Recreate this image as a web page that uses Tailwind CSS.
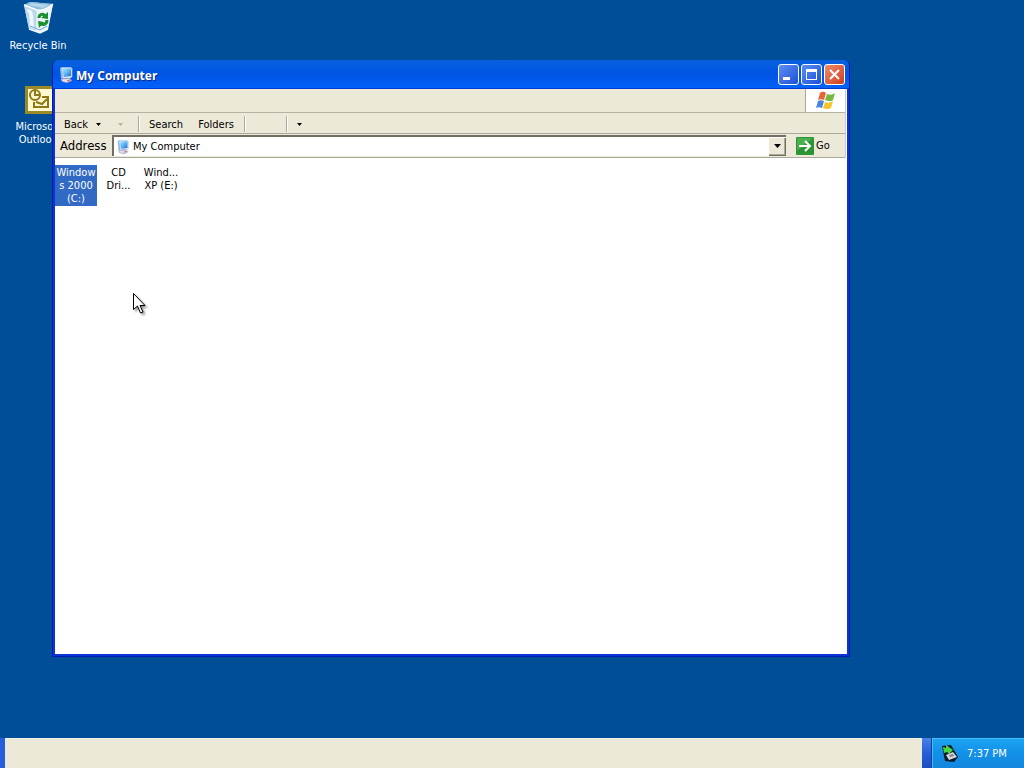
<!DOCTYPE html>
<html lang="en">
<head>
    <meta charset="UTF-8">
    <meta name="viewport" content="width=device-width, initial-scale=1.0">
    <title>My Computer</title>
    <!-- Tailwind CSS -->
    <script src="https://cdn.jsdelivr.net/npm/@tailwindcss/browser@4"></script>
</head>
<body class="h-screen overflow-hidden flex flex-col bg-[#004e98] font-['DejaVu_Sans_Condensed','Noto_Sans',sans-serif] text-[11px] leading-[13px] text-black cursor-default">
    <!-- Shared icons -->
    <svg class="absolute size-0" aria-hidden="true">
        <defs>
            <linearGradient id="screen" x1="0" y1="0" x2="1" y2="1">
                <stop offset="0" stop-color="#b9ecff"/>
                <stop offset=".5" stop-color="#5db5f3"/>
                <stop offset="1" stop-color="#2668cf"/>
            </linearGradient>
        </defs>
        <symbol id="computer" viewBox="0 0 16 16">
            <path d="M2 1l2-1 1 11-2 1z" fill="#8fb4dc"/>
            <path d="M3.500.5h9.500l1 1v8l-2 2H5z" fill="#d8e6f5" stroke="#a9c4e6" stroke-width=".7"/>
            <path d="M4 1.500h9v7.500L6 10z" fill="url(#screen)"/>
            <path d="M7 11h4l1 2H6z" fill="#8290b4"/>
            <path d="M3 12l8-.5 3 2-5 2.300-5-1.300z" fill="#e3e3ee" stroke="#8d86a8" stroke-width=".6"/>
            <path d="M9 14l3-1" stroke="#b05270"/>
        </symbol>
    </svg>

    <!-- Desktop -->
    <main class="relative flex-1 min-h-0">
        <a href="#" class="absolute left-0 top-0 w-19 flex flex-col items-center gap-1 text-white text-center">
            <svg class="w-8 h-[35px]" viewBox="0 0 32 35">
                <path d="M2 5l6-3 23 2-5 25-8 4-11-4z" fill="#d3e6f2"/>
                <path d="M2 5l6-3 23 2-8 5-8 1z" fill="#8dbbdc"/>
                <path d="M6 5l4-2 17 2-6 3z" fill="#b4d5ea"/>
                <path d="M2 5l13 5-1 21-7-2z" fill="#bcd8ea"/>
                <path d="M15 10c6 1 11-2 16-6l-5 25-8 4-4-2z" fill="#edf5fa"/>
                <path d="M4 9c5 5 3 11 4 18l5 2c-3-7 0-13-4-19z" fill="#eef8fd"/>
                <path d="M2 5l13 5c6 1 11-2 16-6" fill="none" stroke="#f8fdff" stroke-width="1.500"/>
                <path d="M7 29l11 4 8-4" fill="none" stroke="#f0f8fd" stroke-width="1.500"/>
                <path d="M8 26l10 4 7-4" fill="none" stroke="#6ca6e0"/>
                <g fill="none" stroke="#16912c" stroke-width="3">
                    <path d="M17 18c0-4 4-5 6-2"/>
                    <path d="M25 20c0 4-3 5-6 4"/>
                </g>
                <path d="M26 12v7l-7-1zM16 21l6 1-5 6z" fill="#16912c"/>
            </svg>
            <span>Recycle Bin</span>
        </a>
        <a href="#" class="absolute left-0 top-[85px] w-19 flex flex-col items-center gap-1 text-white text-center">
            <svg class="w-8 h-[31px]" viewBox="0 0 32 31">
                <path d="M3 1h29v28H3z" fill="#9c8a24"/>
                <path d="M6 4h26v22H6z" fill="#fff9cf"/>
                <g fill="none" stroke="#8d7a17" stroke-width="2">
                    <circle cx="13" cy="10" r="5"/>
                    <path d="M13 6v4h4M20 12h6v10H12v-5M14 17l6 2 5-5"/>
                </g>
            </svg>
            <span>Microsoft<br>Outlook</span>
        </a>

        <!-- Window -->
        <section class="absolute left-[52px] top-[60px] w-[798px] h-[597px] flex flex-col rounded-t-md overflow-hidden bg-[#0a34d4] border-x border-b border-[#0019b8] px-0.5 pb-0.5">
            <header class="-mx-[3px] h-[29px] shrink-0 flex items-center gap-0.5 pt-px pl-1.5 pr-[5px] bg-linear-to-b from-[#0a62df] via-[#0054e3] to-[#0362fb] border-b border-[#003bd0]">
                <svg class="size-4"><use href="#computer"/></svg>
                <h1 class="flex-1 pt-0.5 font-['Open_Sans',sans-serif] font-bold text-[12px] leading-4 text-white text-shadow-[1px_1px_0_#0a2a8c]">My Computer</h1>
                <button aria-label="Minimize" class="size-[21px] rounded-[3px] border border-white bg-linear-to-br from-[#5d8df2] to-[#1b4fd8]">
                    <svg viewBox="0 0 19 19"><path d="M4 12h7v3H4z" fill="#fff"/></svg>
                </button>
                <button aria-label="Maximize" class="size-[21px] rounded-[3px] border border-white bg-linear-to-br from-[#5d8df2] to-[#1b4fd8]">
                    <svg viewBox="0 0 19 19"><path d="M4 4h11v11H4zM5 7v7h9V7z" fill="#fff" fill-rule="evenodd"/></svg>
                </button>
                <button aria-label="Close" class="size-[21px] rounded-[3px] border border-white bg-linear-to-br from-[#ee8a6b] to-[#cf3a16]">
                    <svg viewBox="0 0 19 19"><path d="M5 5l9 9M14 5l-9 9" stroke="#fff" stroke-width="2"/></svg>
                </button>
            </header>

            <div class="flex-1 min-h-0 flex flex-col bg-white">
                <!-- Bars -->
                <div class="mr-px shrink-0 bg-[#ece9d8] border-r border-[#d0cdbf]">
                    <div class="h-6 flex justify-end border-b border-[#b5b2a2]">
                        <div class="w-10 flex items-center justify-center bg-white border-l border-[#aca899]">
                            <svg class="w-5 h-5" viewBox="0 0 20 20">
                                <path d="M4 2c3-2 4-1 6 0L8 9C6 8 4 8 2 9z" fill="#e8633a"/>
                                <path d="M11 3c3 1 5 1 8-1l-2 7c-3 2-5 1-8 0z" fill="#76b843"/>
                                <path d="M2 10c2-1 4-1 6 0l-2 7c-2-1-4-1-6 0z" fill="#4a84dc"/>
                                <path d="M9 11c3 1 5 1 8-1l-2 7c-3 2-5 1-8 0z" fill="#f5c52d"/>
                            </svg>
                        </div>
                    </div>

                    <nav class="h-[21px] pt-0.5 flex items-center border-b border-[#aca899]">
                        <button class="pl-[9px] pr-2 flex items-center gap-2">Back
                            <svg class="w-[5px] h-[3px]" viewBox="0 0 5 3"><path d="M0 0h5L2.500 3z"/></svg>
                        </button>
                        <button aria-label="Forward" class="w-[29px] pr-1.5 flex justify-center" disabled>
                            <svg class="w-[5px] h-[3px]" viewBox="0 0 5 3"><path d="M0 0h5L2.500 3z" fill="#b5b2a2"/></svg>
                        </button>
                        <div class="w-0.5 h-4 border-l border-[#aca899] bg-white"></div>
                        <button class="w-[52px] text-center">Search</button>
                        <button class="w-12 text-center">Folders</button>
                        <div class="ml-1 w-0.5 h-4 border-l border-[#aca899] bg-white"></div>
                        <div class="ml-10 w-0.5 h-4 border-l border-[#aca899] bg-white"></div>
                        <button aria-label="Views" class="w-[22px] flex justify-center">
                            <svg class="w-[5px] h-[3px]" viewBox="0 0 5 3"><path d="M0 0h5L2.500 3z"/></svg>
                        </button>
                    </nav>

                    <form class="h-6 flex items-center border-b border-[#aca899]">
                        <label for="address" class="w-[57px] pl-[5px] text-[13px]">Address</label>
                        <div class="flex-1 h-[21px] flex items-center bg-white border-l-2 border-t-2 border-[#716f64]">
                            <svg class="mx-0.5 w-3.5 h-4"><use href="#computer"/></svg>
                            <input id="address" type="text" value="My Computer" class="flex-1 min-w-0 pl-px outline-none">
                            <button type="button" aria-label="Show addresses" class="w-[17px] h-[18px] flex items-center justify-center bg-[#ece9d8] border-r border-b border-[#716f64] shadow-[inset_-1px_-1px_0_#aca899]">
                                <svg class="w-[7px] h-1" viewBox="0 0 7 4"><path d="M0 0h7L3.500 4z"/></svg>
                            </button>
                        </div>
                        <button type="button" class="w-[59px] pl-[10px] flex items-center gap-0.5">
                            <svg class="w-[18px] h-[18px]" viewBox="0 0 18 18">
                                <rect width="18" height="18" rx="1" fill="#2c9434"/>
                                <path d="M1 1h16L1 14z" fill="#4bad50"/>
                                <path d="M3 9h11M9 4l5 5-5 5" fill="none" stroke="#fff" stroke-width="2"/>
                            </svg>
                            Go
                        </button>
                    </form>
                </div>

                <!-- Drives -->
                <div class="flex items-start pt-[7px] text-center">
                    <a href="#" class="w-[42px] h-[41px] pt-px bg-[#316ac5] text-white">Window<br>s 2000<br>(C:)</a>
                    <a href="#" class="w-[43px] pt-px">CD<br>Dri...</a>
                    <a href="#" class="w-[42px] pt-px">Wind...<br>XP (E:)</a>
                </div>
            </div>
        </section>

        <!-- Mouse pointer -->
        <svg class="absolute left-[133px] top-[293px] w-[15px] h-[23px] drop-shadow-[2px_2px_1px_#00000066]" viewBox="0 0 15 23">
            <path d="M.5.5v16l4-3.500 3 7 2.500-1-3-6.500h5z" fill="#fff" stroke="#000"/>
        </svg>
    </main>

    <!-- Taskbar -->
    <footer class="h-[30px] shrink-0 flex bg-[#245edb]">
        <div class="flex-1 ml-[5px] bg-[#ece9d8] border-t border-[#f5f3e8]"></div>
        <div class="w-[9px] bg-linear-to-b from-[#4a82e4] via-[#245edb] to-[#1d4fc0]"></div>
        <div class="w-[93px] flex items-center pl-[9px] gap-2 bg-linear-to-b from-[#1da5f2] via-[#1290e8] to-[#1487dd] border-l border-[#0d3f9e] shadow-[inset_1px_1px_0_#3fc0f8] text-white">
            <svg class="w-[18px] h-[18px]" viewBox="0 0 18 18">
                <path d="M1 2l9-1 7 12-4 5-9-1z" fill="#0d1a2c"/>
                <path d="M2 3l3 1V1l7 5-4 4-2-2-3 1z" fill="#49d53d"/>
                <path d="M5 11l7-3 4 5-8 3z" fill="#d3d8dd"/>
                <path d="M8 11l4-1 1 2-4 1z" fill="#7c8790"/>
            </svg>
            <time>7:37 PM</time>
        </div>
    </footer>
</body>
</html>
